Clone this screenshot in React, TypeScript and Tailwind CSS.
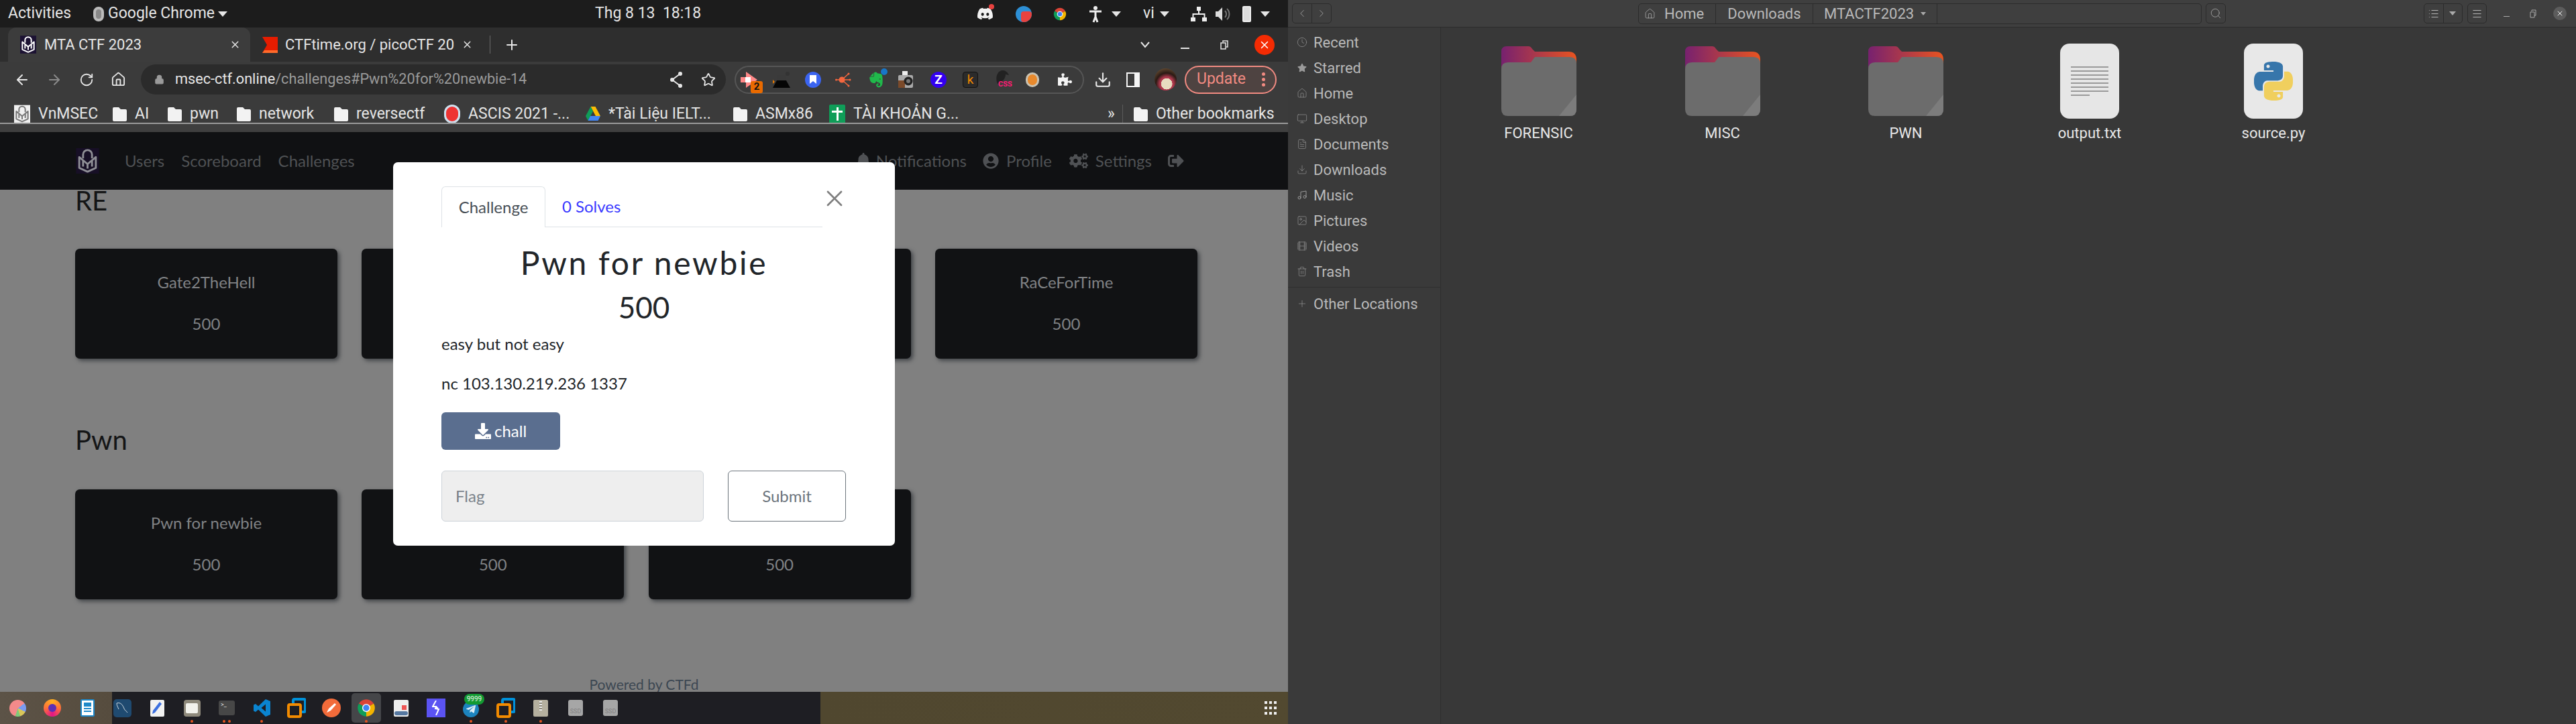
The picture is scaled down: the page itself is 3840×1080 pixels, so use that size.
import { ReactNode } from 'react'
import { ArrowLeft, ArrowRight, RotateCw, Home, Lock, Star, X, ChevronLeft, ChevronRight, Search, Clock, FileText, Download, Music, Image, Film, Trash2, Plus, Monitor, List, Menu } from 'lucide-react'
import { FaBell, FaUserCircle, FaCogs, FaSignOutAlt, FaDownload, FaPuzzlePiece, FaDiscord, FaEvernote, FaTelegramPlane, FaStar } from 'react-icons/fa'

function Caret({ className = '' }: { className?: string }) {
    return <span className={`inline-block w-0 h-0 border-l-[7px] border-r-[7px] border-t-[8px] border-l-transparent border-r-transparent border-t-[#e6e6e6] ${className}`} />
}

function ChromeLogo({ size = 24 }: { size?: number }) {
    return (
        <svg width={size} height={size} viewBox="0 0 48 48">
            <path d="M24 24L4.95 13A22 22 0 0 1 43.05 13Z" fill="#db4437" />
            <path d="M24 24L4.95 13A22 22 0 0 0 24 46Z" fill="#0f9d58" />
            <path d="M24 24L43.05 13A22 22 0 0 1 24 46Z" fill="#f4b400" />
            <circle cx="24" cy="24" r="10.5" fill="#fff" />
            <circle cx="24" cy="24" r="8" fill="#4285f4" />
        </svg>
    )
}

function MtaLogo({ className = '', stroke = '#fff', bg = '#1c1233' }: { className?: string; stroke?: string; bg?: string }) {
    return (
        <svg className={className} viewBox="0 0 36 40">
            <rect width="36" height="40" fill={bg} />
            <path d="M11 16V10a7 7 0 0 1 14 0v6" fill="none" stroke={stroke} strokeWidth="3" />
            <path d="M5 14L18 25L31 14V31L18 37L5 31Z" fill="none" stroke={stroke} strokeWidth="3" strokeLinejoin="round" />
            <path d="M11 20V29M25 20V29M18 25v7" stroke={stroke} strokeWidth="3" />
        </svg>
    )
}

function BookmarkFolder() {
    return (
        <svg width="21" height="24" viewBox="0 0 21 24">
            <path d="M2 2h7l3 3h7a2 2 0 0 1 2 2v14a2 2 0 0 1-2 2H2a2 2 0 0 1-2-2V4a2 2 0 0 1 2-2Z" fill="#f2f2f2" />
        </svg>
    )
}

function TopBar() {
    return (
        <div className="h-[41px] shrink-0 bg-[#1c1c1c] flex items-center text-[#e6e6e6] text-[23px]">
            <span className="ml-[12px] w-[127px]">Activities</span>
            <span className="w-[16px] h-[22px] rounded-full bg-[#888] border-[4px] border-[#bbb]" />
            <span className="ml-[6px] w-[164px] whitespace-nowrap">Google Chrome</span>
            <Caret />
            <span className="ml-[548px] w-[153px] whitespace-nowrap">Thg 8 13&nbsp;&nbsp;18:18</span>
            <span className="ml-[412px] w-[33px] flex justify-center relative">
                <FaDiscord size={25} color="#f2f2f2" />
                <span className="absolute right-[3px] top-[-2px] w-[8px] h-[8px] rounded-full bg-[#e8423f]" />
            </span>
            <span className="ml-[29px] w-[24px] h-[24px] rounded-full bg-[#2d8fd5] relative overflow-hidden">
                <span className="absolute right-0 bottom-0 w-[16px] h-[16px] rounded-[4px] bg-[#e8423f]" />
            </span>
            <span className="ml-[32px]"><ChromeLogo size={20} /></span>
            <svg className="ml-[33px]" width="20" height="26" viewBox="0 0 20 26">
                <circle cx="10" cy="4" r="3" fill="#eee" />
                <path d="M1 9h18M10 9v8M10 17l-3 8M10 17l3 8" stroke="#eee" strokeWidth="3" fill="none" />
            </svg>
            <Caret className="ml-[14px]" />
            <span className="ml-[33px] w-[24px]">vi</span>
            <Caret className="ml-[1px]" />
            <svg className="ml-[32px]" width="24" height="24" viewBox="0 0 24 24">
                <path d="M9 1h6v6H9zM0 17h7v6H0zM17 17h7v6h-7z" fill="#eee" />
                <path d="M12 7v5M3.5 17v-5h17v5" stroke="#eee" strokeWidth="2" fill="none" />
            </svg>
            <svg className="ml-[12px]" width="24" height="24" viewBox="0 0 24 24">
                <path d="M1 8h4l6-6v20l-6-6H1Z" fill="#ddd" />
                <path d="M15 7a7 7 0 0 1 0 10M18 4a11 11 0 0 1 0 16" stroke="#777" strokeWidth="2" fill="none" />
            </svg>
            <span className="ml-[17px] w-[13px] h-[24px] border-[2px] border-[#eee] rounded-[2px] bg-[#ddd]" />
            <Caret className="ml-[14px]" />
        </div>
    )
}

function TabStrip() {
    return (
        <div className="h-[51px] shrink-0 bg-[#2e2e2e] flex items-center text-[#e6e6e6] text-[22px]">
            <div className="ml-[12px] w-[361px] h-full bg-[#3c3c3c] rounded-t-[12px] flex items-center">
                <MtaLogo className="ml-[18px] w-[24px] h-[29px]" />
                <span className="ml-[12px] whitespace-nowrap">MTA CTF 2023</span>
                <X size={17} className="ml-auto mr-[14px]" />
            </div>
            <div className="w-[358px] h-full flex items-center relative">
                <svg className="ml-[18px]" width="23" height="24" viewBox="0 0 23 24">
                    <path d="M0 0h23v24H0l7-12Z" fill="#e61c00" />
                    <path d="M3 20h20v4H0Z" fill="#ff6a2a" />
                </svg>
                <span className="ml-[11px] w-[260px] overflow-hidden whitespace-nowrap">CTFtime.org / picoCTF 20</span>
                <X size={17} className="ml-[3px]" />
                <span className="absolute right-0 top-[12px] h-[27px] w-[1px] bg-[#6a6a6a]" />
            </div>
            <Plus size={24} className="ml-[20px]" />
            <svg className="ml-[925px]" width="14" height="10" viewBox="0 0 14 10"><path d="M1 1l6 7 6-7" stroke="#e6e6e6" strokeWidth="2" fill="none" /></svg>
            <span className="ml-[46px] w-[13px] h-[2px] bg-[#e6e6e6] mt-[10px]" />
            <svg className="ml-[46px]" width="12" height="14" viewBox="0 0 12 14"><path d="M1 4h7v9H1zM4 3V1h7v9H9" stroke="#e6e6e6" strokeWidth="1.5" fill="none" /></svg>
            <span className="ml-[39px] w-[30px] h-[30px] rounded-full bg-[#f42b03] flex items-center justify-center"><X size={18} color="#fff" /></span>
        </div>
    )
}

function ExtensionIcons() {
    return (
        <div className="ml-[13px] w-[521px] h-[42px] border-[2px] border-[#565656] rounded-full flex items-center shrink-0">
            <span className="ml-[7px] w-[24px] h-[24px] relative">
                <svg width="26" height="24" viewBox="0 0 26 24"><path d="M0 8h8V0l17 12L8 24v-8H0Z" fill="#f88" /><rect x="7" y="8" width="8" height="8" fill="#fff" /></svg>
                <span className="absolute left-[15px] top-[14px] w-[18px] h-[18px] rounded-[3px] bg-[#e96a00] text-[#111] text-[15px] font-bold flex items-center justify-center">2</span>
            </span>
            <svg className="ml-[24px]" width="26" height="24" viewBox="0 0 26 24">
                <path d="M6 5h14l-1 8H7Z" fill="#3a3a3a" /><path d="M0 24l6-11h14l6 11Z" fill="#050505" /><path d="M0 12l3 3-3 3Z" fill="#e87b00" /><circle cx="22" cy="3" r="3" fill="#333" />
            </svg>
            <span className="ml-[22px] w-[24px] h-[24px] rounded-full bg-[#3b64f0] flex items-center justify-center">
                <svg width="10" height="13" viewBox="0 0 10 13"><path d="M0 0h10v13L5 9l-5 4Z" fill="#fff" /></svg>
            </span>
            <svg className="ml-[21px]" width="24" height="24" viewBox="0 0 24 24">
                <circle cx="10" cy="12" r="4.5" fill="#f4673f" /><path d="M10 12L20 3M10 12H22M10 12L20 21M10 12H1" stroke="#f4673f" strokeWidth="1.5" /><circle cx="20" cy="3" r="1.5" fill="#f4673f" /><circle cx="22" cy="12" r="1.5" fill="#f4673f" /><circle cx="20" cy="21" r="1.5" fill="#f4673f" /><circle cx="1.5" cy="12" r="1.5" fill="#f4673f" />
            </svg>
            <span className="ml-[24px] w-[26px] h-[26px] relative">
                <FaEvernote size={26} color="#20b94b" />
                <span className="absolute right-[-4px] top-[-4px] w-[10px] h-[10px] rounded-full bg-[#1877c9]" />
            </span>
            <svg className="ml-[20px]" width="24" height="26" viewBox="0 0 24 26">
                <rect x="6" y="0" width="8" height="6" fill="#eee" /><rect x="0" y="6" width="22" height="19" rx="2" fill="#aaa" /><rect x="0" y="14" width="10" height="11" fill="#7b4a2a" /><circle cx="15" cy="15" r="6.5" fill="#222" /><circle cx="15" cy="15" r="3" fill="#777" />
            </svg>
            <span className="ml-[24px] w-[24px] h-[24px] rounded-full bg-[#3300f0] text-white text-[19px] font-bold leading-none flex items-center justify-center">Z</span>
            <span className="ml-[24px] w-[23px] h-[24px] rounded-[4px] bg-[#2b2b2b] border border-[#111] text-[#f08a00] text-[19px] leading-none flex items-center justify-center">k</span>
            <span className="ml-[25px] w-[24px] h-[28px] relative">
                <svg width="22" height="20" viewBox="0 0 22 20"><path d="M4 20C0 10 4 0 12 0c4 0 7 3 9 7l-5-1c0 7-5 11-12 14Z" fill="#222" /></svg>
                <span className="absolute left-[5px] top-[15px] text-[#ff1a75] text-[11px] font-bold leading-none">CSS</span>
            </span>
            <span className="ml-[22px] w-[20px] h-[22px] rounded-full bg-[#e8892c] border-[3px] border-[#c9c3b4]" />
            <FaPuzzlePiece size={21} color="#f5f5f5" className="ml-[28px]" />
        </div>
    )
}

function Toolbar() {
    return (
        <div className="h-[53px] shrink-0 bg-[#3b3b3b] flex items-center text-[#e6e6e6]">
            <ArrowLeft size={24} className="ml-[21px]" />
            <ArrowRight size={24} className="ml-[24px] text-[#8a8a8a]" />
            <RotateCw size={22} className="ml-[25px]" />
            <Home size={23} className="ml-[25px]" />
            <div className="ml-[22px] w-[872px] h-[45px] rounded-full bg-[#2b2b2b] flex items-center shrink-0">
                <Lock size={15} fill="#9a9a9a" color="#9a9a9a" className="ml-[20px]" />
                <span className="ml-[16px] text-[21.7px] whitespace-nowrap">msec-ctf.online<span className="text-[#9a9a9a]">/challenges#Pwn%20for%20newbie-14</span></span>
                <svg className="ml-auto" width="20" height="24" viewBox="0 0 20 24">
                    <path d="M16 3L4 12l12 9" stroke="#e6e6e6" strokeWidth="2" fill="none" />
                    <circle cx="16" cy="3" r="3" fill="#e6e6e6" />
                    <circle cx="4" cy="12" r="3" fill="#e6e6e6" />
                    <circle cx="16" cy="21" r="3" fill="#e6e6e6" />
                </svg>
                <Star size={22} className="ml-[27px] mr-[15px]" />
            </div>
            <ExtensionIcons />
            <Download size={26} className="ml-[15px]" />
            <span className="ml-[22px] w-[20px] h-[22px] bg-[#f5f5f5] flex pl-[2px] py-[2px] pr-[8px]">
                <span className="flex-1 bg-[#3b3b3b]" />
            </span>
            <span className="ml-[22px] w-[33px] h-[33px] rounded-full bg-[radial-gradient(circle_at_55%_70%,#e8dcc0_0_28%,#b0394e_29%_34%,#2a1a14_55%,#8a6a44_100%)]" />
            <div className="ml-[12px] w-[137px] h-[42px] rounded-full border-[2px] border-[#f28b82] bg-[#4e4341] text-[#f28b82] text-[23px] flex items-center shrink-0">
                <span className="ml-[16px]">Update</span>
                <span className="ml-auto mr-[15px] flex flex-col gap-[3px]">
                    <span className="w-[5px] h-[5px] rounded-full bg-[#f28b82]" />
                    <span className="w-[5px] h-[5px] rounded-full bg-[#f28b82]" />
                    <span className="w-[5px] h-[5px] rounded-full bg-[#f28b82]" />
                </span>
            </div>
        </div>
    )
}

function BookmarksBar() {
    const item = (icon: ReactNode, label: string, width: string) => (
        <span className={`flex items-center gap-[12px] whitespace-nowrap shrink-0 ${width}`}>
            {icon}
            {label}
        </span>
    )
    return (
        <div className="h-[38px] shrink-0 bg-[#3b3b3b] flex items-center text-[#e6e6e6] text-[23px] pl-[21px] pt-[12px] overflow-hidden">
            {item(<MtaLogo className="w-[24px] h-[28px]" stroke="#777" bg="#f0f0f0" />, 'VnMSEC', 'w-[147px]')}
            {item(<BookmarkFolder />, 'AI', 'w-[82px]')}
            {item(<BookmarkFolder />, 'pwn', 'w-[103px]')}
            {item(<BookmarkFolder />, 'network', 'w-[145px]')}
            {item(<BookmarkFolder />, 'reversectf', 'w-[164px]')}
            {item(<span className="w-[24px] h-[28px] rounded-full bg-[#e33] border-[3px] border-[#cfe0ee]" />, 'ASCIS 2021 -...', 'w-[211px]')}
            {item(
                <svg width="22" height="22" viewBox="0 0 22 22"><path d="M7.5 0h7L22 14h-7Z" fill="#fbbc04" /><path d="M7.5 0L0 14l3.5 7L11 7Z" fill="#0f9d58" /><path d="M3.5 21h15L22 14H7Z" fill="#4285f4" /></svg>,
                '*Tài Liệu IELT...',
                'w-[220px]',
            )}
            {item(<BookmarkFolder />, 'ASMx86', 'w-[143px]')}
            {item(
                <span className="w-[24px] h-[28px] bg-[#0f9d58] rounded-[2px] flex items-center justify-center relative"><span className="w-[3px] h-[20px] bg-white" /><span className="absolute w-[16px] h-[3px] bg-white top-[9px]" /></span>,
                'TÀI KHOẢN G...',
                'w-[415px]',
            )}
            <span className="w-[22px]">»</span>
            <span className="w-[1px] h-[28px] bg-[#5a5a5a]" />
            <span className="ml-[16px]">{item(<BookmarkFolder />, 'Other bookmarks', '')}</span>
        </div>
    )
}

function ChallengeCard({ name }: { name?: string }) {
    return (
        <div className="h-[164px] rounded-[7px] bg-[#111214] shadow-[3px_3px_6px_#3f4246] flex flex-col items-center pt-[32px] text-[#808285] text-[24px] leading-[36px]">
            <div className="h-[36px]">{name}</div>
            <div className="mt-[26px]">500</div>
        </div>
    )
}

function ChallengeBoard() {
    const navLink = 'text-[#4f5154] text-[24px]'
    return (
        <div className="flex-1 min-h-0 relative overflow-hidden bg-[#808080] flex flex-col font-['Lato',sans-serif]">
            <nav className="h-[86px] shrink-0 bg-[#101113] flex items-center pl-[112px] relative z-10 text-[#4f5154]">
                <MtaLogo className="w-[37px] h-[38px]" stroke="#8f8f96" bg="#170f26" />
                <span className={`ml-[37px] ${navLink}`}>Users</span>
                <span className={`ml-[25px] ${navLink}`}>Scoreboard</span>
                <span className={`ml-[25px] ${navLink}`}>Challenges</span>
                <FaBell size={24} className="ml-[746px]" />
                <span className={`ml-[7px] ${navLink}`}>Notifications</span>
                <FaUserCircle size={24} className="ml-[24px]" />
                <span className={`ml-[11px] ${navLink}`}>Profile</span>
                <FaCogs size={28} className="ml-[26px]" />
                <span className={`ml-[11px] ${navLink}`}>Settings</span>
                <FaSignOutAlt size={24} className="ml-[24px]" />
            </nav>
            <div className="pl-[112px] -mt-[8px] text-[#141516]">
                <h2 className="text-[40px] leading-[48px]">RE</h2>
                <div className="mt-[48px] grid grid-cols-[repeat(4,391px)] gap-x-[36.33px]">
                    <ChallengeCard name="Gate2TheHell" />
                    <ChallengeCard />
                    <ChallengeCard />
                    <ChallengeCard name="RaCeForTime" />
                </div>
                <h2 className="mt-[97px] text-[40px] leading-[48px]">Pwn</h2>
                <div className="mt-[50px] grid grid-cols-[repeat(4,391px)] gap-x-[36.33px]">
                    <ChallengeCard name="Pwn for newbie" />
                    <ChallengeCard />
                    <ChallengeCard />
                </div>
            </div>
            <div className="mt-auto -mb-[7px] text-center text-[21px] leading-[36px] text-[#3c4752]">Powered by CTFd</div>

            {/* modal sits over the board */}
            <div className="absolute left-[586px] top-[45px] z-20 w-[748px] h-[572px] bg-white rounded-[7px] pl-[72px] pt-[36px] text-[#212529]">
                <div className="w-[568px] h-[61px] border-b border-[#dee2e6] flex items-stretch text-[24px]">
                    <div className="w-[155px] h-[61px] border border-b-0 border-[#dee2e6] bg-white rounded-t-[6px] flex items-center justify-center text-[#495057]">Challenge</div>
                    <div className="ml-[25px] flex items-center text-[#3a3aff]">0 Solves</div>
                </div>
                <X size={40} strokeWidth={1.6} className="absolute left-[638px] top-[34px] text-[#7f7f7f]" />
                <h3 className="mt-[23px] w-[604px] text-center text-[48px] leading-[60px] tracking-[2.7px]">Pwn for newbie</h3>
                <div className="mt-[12px] w-[604px] text-center text-[44px] leading-[48px]">500</div>
                <p className="mt-[13px] text-[24px] leading-[36px]">easy but not easy</p>
                <p className="mt-[23px] text-[24px] leading-[36px]">nc 103.130.219.236 1337</p>
                <button className="mt-[25px] w-[177px] h-[56px] rounded-[6px] bg-[#5a6e8f] text-white text-[24px] flex items-center justify-center gap-[5px]">
                    <FaDownload size={24} />
                    chall
                </button>
                <div className="mt-[31px] flex">
                    <div className="w-[391px] h-[76px] rounded-[6px] border border-[#ced4da] bg-[#eeeeee] flex items-center pl-[20px] text-[24px] text-[#7a828a]">Flag</div>
                    <button className="ml-[36px] w-[176px] h-[76px] rounded-[6px] border border-[#6c757d] text-[24px] text-[#6c757d]">Submit</button>
                </div>
            </div>
        </div>
    )
}

function Dock() {
    const cell = (icon: ReactNode, dots = 0, active = false) => (
        <span className="w-[52px] h-full shrink-0 flex items-center justify-center relative">
            {active && <span className="absolute left-[4px] top-[2px] w-[44px] h-[44px] rounded-[5px] bg-[#454649]" />}
            <span className="relative flex">{icon}</span>
            {dots > 0 && (
                <span className="absolute bottom-[2px] left-0 right-0 flex justify-center gap-[4px]">
                    {Array.from({ length: dots }).map((_, i) => <span key={i} className="w-[4px] h-[4px] rounded-full bg-[#e95420]" />)}
                </span>
            )}
        </span>
    )
    const vmware = (
        <svg width="28" height="30" viewBox="0 0 28 30">
            <path d="M9 9V4a2 2 0 0 1 2-2h14a2 2 0 0 1 2 2v15a2 2 0 0 1-2 2h-5" fill="none" stroke="#0091da" strokeWidth="4" />
            <rect x="2" y="10" width="18" height="18" rx="2" fill="none" stroke="#f38b00" strokeWidth="4" />
        </svg>
    )
    const ssd = (
        <span className="w-[22px] h-[24px] rounded-[3px] bg-[#a6a6a6] text-[#808080] text-[9px] flex items-end justify-center">SSD</span>
    )
    return (
        <div className="h-[48px] shrink-0 flex items-center bg-[linear-gradient(to_right,#5c5347_0,#564c3e_167px,#1e1e23_167px,#1e1e23_1223px,#50472f_1223px,#524930_100%)]">
            {cell(
                <span className="w-[25px] h-[25px] rounded-full bg-[conic-gradient(#f48a8a_0_15%,#7a9bf0_15%_32%,#d9c65a_32%_45%,#7fca7a_45%_55%,#f48a8a_55%_100%)]" />,
            )}
            {cell(
                <span className="w-[26px] h-[26px] rounded-full bg-[conic-gradient(#ffb020,#ff7139,#e31587,#ff7139,#ffb020)] flex items-center justify-center"><span className="w-[12px] h-[12px] rounded-full bg-[#5d2fb5]" /></span>,
            )}
            {cell(
                <span className="w-[21px] h-[26px] bg-white rounded-[2px] border-[2px] border-[#1e88c9] flex flex-col gap-[2px] p-[3px]">
                    <span className="h-[6px] bg-[#1e88c9]" />
                    <span className="h-[2px] bg-[#1e88c9]" />
                    <span className="h-[2px] bg-[#1e88c9]" />
                </span>,
            )}
            {cell(
                <span className="w-[27px] h-[27px] rounded-[5px] bg-[#1f4a70] flex items-center justify-center">
                    <svg width="20" height="20" viewBox="0 0 20 20"><path d="M2 3c6-2 9 3 11 8 1 3 4 4 5 6M2 3c0 4 2 6 3 9" stroke="#cfd8df" strokeWidth="1" fill="none" /></svg>
                </span>,
            )}
            {cell(
                <span className="w-[21px] h-[25px] rounded-[2px] bg-[#f2f2f2] flex items-center justify-center">
                    <svg width="16" height="20" viewBox="0 0 16 20"><path d="M12 1l3 3L5 17l-4 2 1-5Z" fill="#3b6fe0" /></svg>
                </span>,
            )}
            {cell(<span className="w-[25px] h-[25px] rounded-[4px] bg-[#8e897b] flex items-center justify-center"><span className="w-[18px] h-[15px] rounded-[2px] bg-[#f2f2ec]" /></span>, 1)}
            {cell(<span className="w-[24px] h-[22px] rounded-[3px] bg-[#474747] text-[#ddd] text-[9px] leading-[12px] pl-[3px]">&gt;_</span>, 2)}
            {cell(
                <svg width="25" height="26" viewBox="0 0 25 26">
                    <path d="M18 0l7 3v20l-7 3L7 15.500l-4 3.500-3-1.500V8.500L3 7l4 3.500ZM18 7.500L11.500 13 18 18.500Z" fill="#0a84d0" />
                </svg>,
                1,
            )}
            {cell(vmware)}
            {cell(<span className="w-[28px] h-[28px] rounded-full bg-[#f26b3a] flex items-center justify-center"><svg width="18" height="18" viewBox="0 0 18 18"><path d="M2 16l3-6L14 2l2 2-8 9Z" fill="#fff" /></svg></span>)}
            {cell(<ChromeLogo size={28} />, 1, true)}
            {cell(
                <span className="w-[22px] h-[25px] rounded-[2px] bg-[#eee] relative overflow-hidden">
                    <span className="absolute right-[3px] top-[8px] w-[7px] h-[7px] bg-[#e55]" />
                    <span className="absolute left-[1px] bottom-[2px] w-[20px] h-[6px] rounded-[3px] bg-[#5577a0]" />
                </span>,
            )}
            {cell(<span className="w-[28px] h-[28px] bg-[#5b53f2] flex items-center justify-center"><svg width="12" height="22" viewBox="0 0 12 22"><path d="M6 0L1 9h5l-1 3 5 1-4 9M6 9l3 3" stroke="#fff" strokeWidth="2" fill="none" /></svg></span>)}
            {cell(
                <span className="w-[24px] h-[24px] mt-[4px] rounded-full bg-[#1c83bd] flex items-center justify-center relative">
                    <FaTelegramPlane size={16} color="#dcecf5" />
                    <span className="absolute left-[2px] top-[-11px] w-[30px] h-[16px] rounded-full bg-[#129a32] text-[#e8f5e9] text-[10px] leading-[16px] text-center">9999</span>
                </span>,
                1,
            )}
            {cell(vmware, 1)}
            {cell(
                <span className="w-[22px] h-[25px] rounded-[2px] bg-[#b5b09f] flex justify-center">
                    <span className="w-[4px] h-[14px] mt-[2px] bg-[repeating-linear-gradient(#eee_0_2px,#8b8778_2px_4px)]" />
                </span>,
                1,
            )}
            {cell(ssd)}
            {cell(ssd)}
            <span className="ml-auto mr-[17px] grid grid-cols-3 gap-x-[3px] gap-y-[4px]">
                {Array.from({ length: 9 }).map((_, i) => <span key={i} className="w-[4px] h-[4px] bg-[#eee]" />)}
            </span>
        </div>
    )
}

function SidebarItem({ icon, label }: { icon: ReactNode; label: string }) {
    return (
        <div className="h-[38px] flex items-center pl-[13px] gap-[9px]">
            <span className="w-[16px] flex justify-center text-[#9a9a9a]">{icon}</span>
            {label}
        </div>
    )
}

function FolderIcon() {
    return (
        <svg width="112" height="104" viewBox="0 0 112 104">
            <defs>
                <linearGradient id="folderBack" x1="0" y1="0" x2="1" y2="0">
                    <stop offset="0" stopColor="#77216f" />
                    <stop offset="1" stopColor="#e95420" />
                </linearGradient>
            </defs>
            <path d="M8 0H40Q44 0 46 4L50 8H100Q112 8 112 20V60H0V8Q0 0 8 0Z" fill="url(#folderBack)" />
            <path d="M0 34Q0 24 10 24H44L50 16H102Q112 16 112 26V94Q112 104 102 104H10Q0 104 0 94Z" fill="#6c6c6c" />
            <path d="M112 72L86 104H102Q112 104 112 94Z" fill="#7c7c7c" />
        </svg>
    )
}

function FileItem({ icon, label, width }: { icon: ReactNode; label: string; width: string }) {
    return (
        <div className={`flex flex-col items-center ${width}`}>
            <div className="h-[112px] flex items-start justify-center">{icon}</div>
            <div className="mt-[10px] h-[24px] leading-[24px] text-[22px] text-[#e8e8e8]">{label}</div>
        </div>
    )
}

function PythonIcon() {
    return (
        <svg width="58" height="58" viewBox="0 0 24 24">
            <path
                fillRule="evenodd"
                fill="#3776ab"
                d="M14.25.18l.9.2.73.26.59.3.45.32.34.34.25.34.16.33.1.3.04.26.02.2-.01.13V8.5l-.05.63-.13.55-.21.46-.26.38-.3.31-.33.25-.35.19-.35.14-.33.1-.3.07-.26.04-.21.02H8.77l-.69.05-.59.14-.5.22-.41.27-.33.32-.27.35-.2.36-.15.37-.1.35-.07.32-.04.27-.02.21v3.06H3.17l-.21-.03-.28-.07-.32-.12-.35-.18-.36-.26-.36-.36-.35-.46-.32-.59-.28-.73-.21-.88-.14-1.05-.05-1.23.06-1.22.16-1.04.24-.87.32-.71.36-.57.4-.44.42-.33.42-.24.4-.16.36-.1.32-.05.24-.01h.16l.06.01h8.16v-.83H6.18l-.01-2.75-.02-.37.05-.34.11-.31.17-.28.25-.26.31-.23.38-.2.44-.18.51-.15.58-.12.64-.1.71-.06.77-.04.84-.02 1.27.05zm-6.3 1.98l-.23.33-.08.41.08.41.23.34.33.22.41.09.41-.09.33-.22.23-.34.08-.41-.08-.41-.23-.33-.33-.22-.41-.09-.41.09z"
            />
            <path
                fillRule="evenodd"
                fill="#f0cf5e"
                d="M21.04 6.11l.28.06.32.12.35.18.36.27.36.35.35.47.32.59.28.73.21.88.14 1.04.05 1.23-.06 1.23-.16 1.04-.24.86-.32.71-.36.57-.4.45-.42.33-.42.24-.4.16-.36.09-.32.05-.24.02-.16-.01h-8.22v.82h5.84l.01 2.76.02.36-.05.34-.11.31-.17.29-.25.25-.31.24-.38.2-.44.17-.51.15-.58.13-.64.09-.71.07-.77.04-.84.01-1.27-.04-1.07-.14-.9-.2-.73-.25-.59-.3-.45-.33-.34-.34-.25-.34-.16-.33-.1-.3-.04-.25-.02-.2.01-.13v-5.34l.05-.64.13-.54.21-.46.26-.38.3-.32.33-.24.35-.2.35-.14.33-.1.3-.06.26-.04.21-.02.13-.01h5.84l.69-.05.59-.14.5-.21.41-.28.33-.32.27-.35.2-.36.15-.36.1-.35.07-.32.04-.28.02-.21V6.070h2.09l.14.01zm-6.47 14.25l-.23.33-.08.41.08.41.23.33.33.23.41.08.41-.08.33-.23.23-.33.08-.41-.08-.41-.23-.33-.33-.23-.41-.08-.41.08z"
            />
        </svg>
    )
}

function FileManager() {
    const headerBtn = 'border border-[#2b2b2b] rounded-[5px] h-[30px] flex items-center justify-center text-[#b5b5b5]'
    return (
        <div className="w-[1920px] h-full bg-[#383838] flex flex-col text-[#b9b9b9] text-[22px]">
            <div className="h-[41px] shrink-0 bg-[#3f3f3f] border-b border-[#2b2b2b] flex items-center">
                <div className={`ml-[6px] w-[59px] ${headerBtn}`}>
                    <ChevronLeft size={18} className="flex-1" strokeWidth={1} />
                    <span className="w-[1px] h-full bg-[#2b2b2b]" />
                    <ChevronRight size={18} className="flex-1" strokeWidth={1} />
                </div>
                <div className="ml-[457px] w-[840px] h-[31px] border border-[#2b2b2b] rounded-[5px] flex items-stretch">
                    <div className="w-[115px] flex items-center pl-[8px] gap-[13px] border-r border-[#2b2b2b]"><Home size={17} strokeWidth={1} />Home</div>
                    <div className="w-[145px] flex items-center justify-center border-r border-[#2b2b2b]">Downloads</div>
                    <div className="w-[185px] flex items-center pl-[16px] gap-[10px] border-r border-[#2b2b2b] whitespace-nowrap">
                        MTACTF2023
                        <span className="w-0 h-0 border-l-[4px] border-r-[4px] border-t-[5px] border-l-transparent border-r-transparent border-t-[#aaa]" />
                    </div>
                </div>
                <div className={`ml-[6px] w-[30px] ${headerBtn}`}><Search size={18} strokeWidth={1} /></div>
                <div className={`ml-[295px] w-[58px] ${headerBtn}`}>
                    <List size={17} className="flex-1" strokeWidth={1.5} />
                    <span className="w-[1px] h-full bg-[#2b2b2b]" />
                    <span className="flex-1 flex justify-center"><span className="w-0 h-0 border-l-[5px] border-r-[5px] border-t-[6px] border-l-transparent border-r-transparent border-t-[#aaa]" /></span>
                </div>
                <div className={`ml-[7px] w-[29px] ${headerBtn}`}><Menu size={17} strokeWidth={1.5} /></div>
                <span className="ml-[25px] w-[9px] h-[1px] bg-[#aaa] mt-[8px]" />
                <svg className="ml-[30px]" width="10" height="13" viewBox="0 0 10 13"><path d="M1 4h6v8H1zM3 3V1h6v8H7" stroke="#aaa" fill="none" /></svg>
                <span className="ml-[25px] w-[20px] h-[20px] rounded-full bg-[#5c5c5c] flex items-center justify-center"><X size={12} color="#eee" /></span>
            </div>
            <div className="flex-1 min-h-0 flex">
                <aside className="w-[228px] shrink-0 bg-[#3a3a3a] border-r border-[#2f2f2f] pt-[3px]">
                    <SidebarItem icon={<Clock size={16} strokeWidth={1} />} label="Recent" />
                    <SidebarItem icon={<FaStar size={14} />} label="Starred" />
                    <SidebarItem icon={<Home size={16} strokeWidth={1} />} label="Home" />
                    <SidebarItem icon={<Monitor size={16} strokeWidth={1} />} label="Desktop" />
                    <SidebarItem icon={<FileText size={16} strokeWidth={1} />} label="Documents" />
                    <SidebarItem icon={<Download size={16} strokeWidth={1} />} label="Downloads" />
                    <SidebarItem icon={<Music size={16} strokeWidth={1.5} />} label="Music" />
                    <SidebarItem icon={<Image size={16} strokeWidth={1} />} label="Pictures" />
                    <SidebarItem icon={<Film size={16} strokeWidth={1} />} label="Videos" />
                    <SidebarItem icon={<Trash2 size={16} strokeWidth={1} />} label="Trash" />
                    <div className="h-[1px] bg-[#2f2f2f] mt-[4px] mb-[5px]" />
                    <SidebarItem icon={<Plus size={16} strokeWidth={1} />} label="Other Locations" />
                </aside>
                <main className="flex-1 pl-[8px] pt-[24px] flex items-start">
                    <FileItem width="w-[275px]" label="FORENSIC" icon={<span className="mt-[4px] flex"><FolderIcon /></span>} />
                    <FileItem width="w-[273px]" label="MISC" icon={<span className="mt-[4px] flex"><FolderIcon /></span>} />
                    <FileItem width="w-[274px]" label="PWN" icon={<span className="mt-[4px] flex"><FolderIcon /></span>} />
                    <FileItem
                        width="w-[274px]"
                        label="output.txt"
                        icon={
                            <span className="w-[88px] h-[112px] rounded-[14px] bg-[#e6e6e6] flex flex-col items-start gap-[4px] pt-[34px] pl-[16px]">
                                {[0, 1, 2, 3, 4, 5, 6].map((i) => <span key={i} className="w-[56px] h-[2px] bg-[#9a9a9a]" />)}
                                <span className="w-[28px] h-[2px] bg-[#9a9a9a]" />
                            </span>
                        }
                    />
                    <FileItem
                        width="w-[274px]"
                        label="source.py"
                        icon={<span className="w-[88px] h-[112px] rounded-[14px] bg-[#e8e8e8] flex items-center justify-center"><PythonIcon /></span>}
                    />
                </main>
            </div>
        </div>
    )
}

export default function App() {
    return (
        <div className="w-[3840px] h-[1080px] flex overflow-hidden font-['Roboto',sans-serif]">
            <div className="w-[1920px] h-full flex flex-col">
                <TopBar />
                <TabStrip />
                <Toolbar />
                <BookmarksBar />
                <div className="h-[14px] shrink-0 bg-[#3f3f3f] border-t-[2px] border-[#9a9a9a]" />
                <ChallengeBoard />
                <Dock />
            </div>
            <FileManager />
        </div>
    )
}
